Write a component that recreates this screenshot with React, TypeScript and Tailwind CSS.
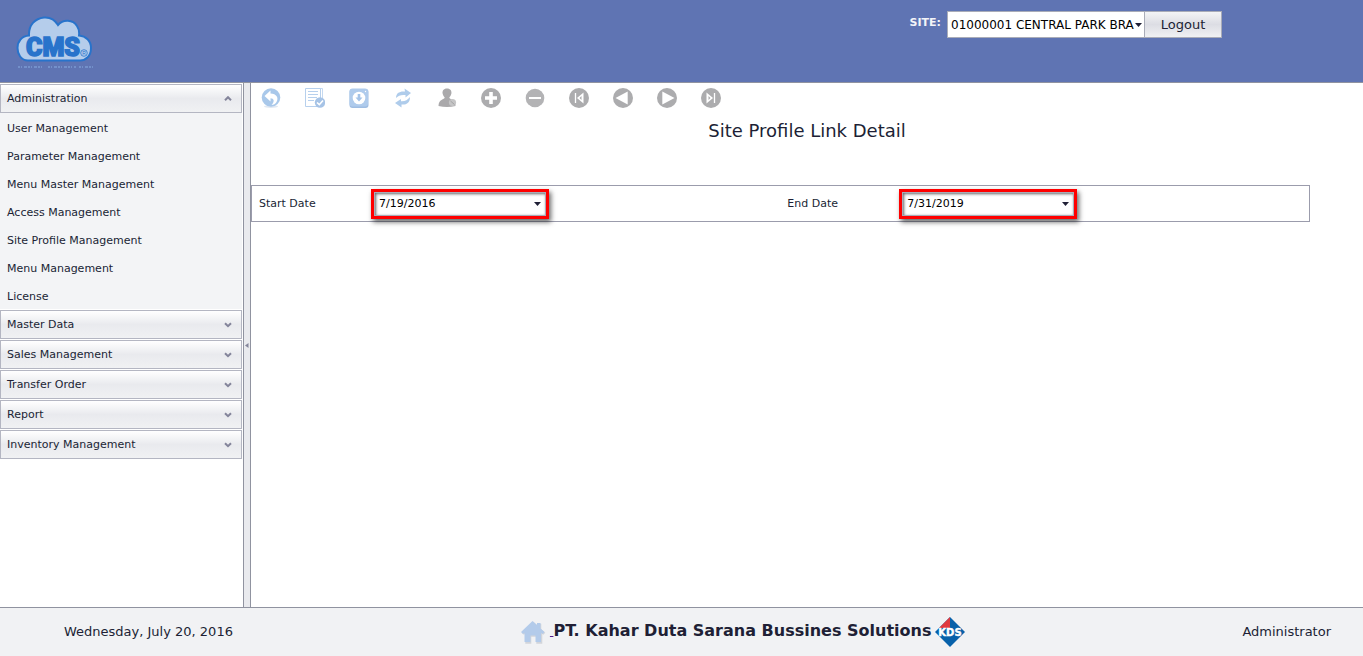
import React, { useState } from "react";

const adminLinks = [
  "User Management",
  "Parameter Management",
  "Menu Master Management",
  "Access Management",
  "Site Profile Management",
  "Menu Management",
  "License",
];

const groups = [
  { name: "Administration", links: adminLinks },
  { name: "Master Data", links: [] },
  { name: "Sales Management", links: [] },
  { name: "Transfer Order", links: [] },
  { name: "Report", links: [] },
  { name: "Inventory Management", links: [] },
];

function Logo() {
  return (
    <svg width="80" height="56" viewBox="0 0 80 56" role="img" aria-label="CMS">
      <path
        d="M12 44.500 C5 44.500 1.500 38 1.500 32 C1.500 25 6 20 13 19.500 C12.500 9 19 2.500 28 1.500 C34 1 39 4 42 9 C47 3 57 3.500 61 10 C63 13 63.500 16 63 19.500 C70 20 75 25 75 32 C75 40 70 44.500 64 44.500 Z"
        fill="#b5cdeb"
        stroke="#2873cb"
        strokeWidth="2"
      />
      <text
        x="37"
        y="40"
        textAnchor="middle"
        fontFamily="Roboto, 'Liberation Sans', sans-serif"
        fontWeight="900"
        fontSize="25"
        fill="#2873cb"
        stroke="#2873cb"
        strokeWidth="1.500"
      >
        CMS
      </text>
      <circle cx="68" cy="37" r="3.300" fill="none" stroke="#2873cb" strokeWidth="0.800" />
      <text x="68" y="39" textAnchor="middle" fontFamily="'Liberation Sans', sans-serif" fontSize="5" fill="#2873cb">
        R
      </text>
      <path d="M2 51 H28 M32 51 H60 M63 51 H77" stroke="#86a9df" strokeWidth="1.500" strokeDasharray="2 1 1 2 3 1" opacity="0.7" />
    </svg>
  );
}

function Chevron({ up }: { up: boolean }) {
  return (
    <svg width="8" height="6" viewBox="0 0 8 6" aria-hidden="true">
      <path d={up ? "M1 4.200 L4 1.200 L7 4.200" : "M1 1.200 L4 4.200 L7 1.200"} fill="none" stroke="#83849a" strokeWidth="2" />
    </svg>
  );
}

function Caret() {
  return (
    <svg width="7" height="4" viewBox="0 0 7 4" aria-hidden="true">
      <path d="M0 0 H7 L3.500 4 Z" fill="#202036" />
    </svg>
  );
}

const disc = <circle cx="10" cy="10" r="10" fill="#acacae" />;

const tools: { label: string; art: React.ReactNode }[] = [
  {
    label: "Back",
    art: (
      <>
        <ellipse cx="10" cy="18.500" rx="7" ry="1.500" fill="#e0e8f2" />
        <circle cx="10" cy="9.500" r="9.300" fill="#a9c8ea" />
        <path d="M3.500 8 L9.500 2.500 V5.500 C15.500 5.500 18 10 15.500 14 C14.500 15.800 12.500 17 10.500 17 C14 13.500 13 10.300 9.500 10.300 V13.500 Z" fill="#fff" />
      </>
    ),
  },
  {
    label: "Save",
    art: (
      <>
        <path d="M3 0.500 H17.500 V15" fill="none" stroke="#c5d9f0" />
        <path d="M0.500 0.500 H15.500 V18.500 H0.500 Z" fill="#fff" stroke="#b7d0ed" />
        <path d="M3 3.500 H13 M3 6.500 H13 M3 9.500 H12 M3 12.500 H9" stroke="#b7d0ed" />
        <circle cx="15" cy="14.500" r="5.200" fill="#a6c3e6" />
        <path d="M12 14.500 L14.300 16.700 L18 12.500" fill="none" stroke="#fff" strokeWidth="1.600" />
      </>
    ),
  },
  {
    label: "Download",
    art: (
      <>
        <rect x="0.500" y="1" width="19" height="19" rx="3" fill="#9fbde2" />
        <rect x="0.500" y="0.500" width="18.500" height="18" rx="3" fill="#afcbec" />
        <circle cx="10" cy="10" r="6.300" fill="#fff" />
        <path d="M8.700 6 H11.300 V9.500 H13.500 L10 13.500 L6.500 9.500 H8.700 Z" fill="#a4c3e8" />
        <circle cx="16.500" cy="3.500" r="0.700" fill="#fff" />
      </>
    ),
  },
  {
    label: "Refresh",
    art: (
      <>
        <path d="M3 10 C3 5 6.500 3 12 3.500 L11.500 0.500 L18 5 L12.500 9.500 V7 C8 6.500 5.500 7.500 3 10 Z" fill="#afcceb" />
        <path d="M17 9 C17 15 13.500 17 8.500 16.500 V19.500 L2 15 L8 11 V13.200 C12 13.500 14.500 12 17 9 Z" fill="#afcceb" />
      </>
    ),
  },
  {
    label: "User",
    art: (
      <>
        <path d="M10 0.500 C13.500 0.500 14.800 3 14.400 5.500 C14 7.500 13 8.700 12.300 9.500 C12.500 11.500 18.500 11 18.500 18 Q10 20 1.500 18 C1.500 11 7.500 11.500 7.700 9.500 C7 8.700 6 7.500 5.600 5.500 C5.200 3 6.500 0.500 10 0.500 Z" fill="#aaa9ab" />
        <circle cx="15.500" cy="14.500" r="3.600" fill="#c5c5c6" />
        <path d="M13.500 13 L17.500 16.500" stroke="#a4a4a5" />
      </>
    ),
  },
  { label: "Add", art: <>{disc}<path d="M10 4 V16 M4 10 H16" stroke="#fff" strokeWidth="3.600" /></> },
  {
    label: "Remove",
    art: (
      <>
        <circle cx="10" cy="10" r="9.300" fill="#b3b3b5" />
        <path d="M4 10 H16" stroke="#fff" strokeWidth="2" />
      </>
    ),
  },
  {
    label: "First",
    art: <>{disc}<path d="M6.500 5 V15" stroke="#fff" strokeWidth="1.300" /><path d="M14.500 4.500 V15.500 L8 10 Z" fill="#fff" /><path d="M12.500 8 V12 L10.500 10 Z" fill="#acacae" /></>,
  },
  { label: "Previous", art: <>{disc}<path d="M14.700 3.500 V16.500 L2.500 10 Z" fill="#fff" /></> },
  { label: "Next", art: <>{disc}<path d="M5.300 3.500 V16.500 L17.500 10 Z" fill="#fff" /></> },
  {
    label: "Last",
    art: <>{disc}<path d="M13.500 5 V15" stroke="#fff" strokeWidth="1.300" /><path d="M5.500 4.500 V15.500 L12 10 Z" fill="#fff" /><path d="M7.500 8 V12 L9.500 10 Z" fill="#acacae" /></>,
  },
];

function DateField({ id, label, initial }: { id: string; label: string; initial: string }) {
  const [value, setValue] = useState(initial);
  return (
    <div className="flex flex-1 items-center">
      <label htmlFor={id} className="w-[119px] shrink-0 pt-0.5 pl-[7px]">
        {label}
      </label>
      <div className="flex h-[30px] w-[178px] border-[3px] border-[#ff0000] bg-white shadow-[2px_3px_5px_rgba(0,0,0,0.6)]">
        <div className="flex min-w-0 flex-1 items-center border border-[#a9acb8] shadow-[inset_1px_1px_3px_rgba(0,0,0,0.6)]">
          <input
            id={id}
            value={value}
            onChange={(e) => setValue(e.target.value)}
            className="min-w-0 flex-1 bg-transparent pt-0.5 pl-1 text-black outline-none"
          />
          <button type="button" aria-label={"Choose " + label} className="flex h-full w-4 items-center justify-center">
            <Caret />
          </button>
        </div>
      </div>
    </div>
  );
}

export default function App() {
  const [open, setOpen] = useState("Administration");
  return (
    <div className="flex min-h-screen flex-col bg-white font-['DejaVu_Sans',Verdana,sans-serif] text-[11px] text-[#201f35]">
      <header className="flex h-[83px] shrink-0 items-start justify-between border-b border-[#9093a0] bg-[#5f74b3] pr-[141px]">
        <div className="pt-4 pl-4">
          <Logo />
        </div>
        <div className="flex items-start pt-[11px]">
          <label htmlFor="site" className="pt-1 pr-1.5 text-[11px] leading-4 font-bold text-[#f3f4f8]">
            SITE:
          </label>
          <div className="relative">
            <select
              id="site"
              className="h-[27px] w-[198px] appearance-none border border-[#a9acb8] bg-white pr-2 pl-[3px] text-[12px] text-black"
            >
              <option>01000001 CENTRAL PARK BRA</option>
            </select>
            <span className="pointer-events-none absolute top-3 right-[3px]">
              <Caret />
            </span>
          </div>
          <button
            type="button"
            className="h-[27px] w-[77px] border border-l-0 border-[#a9acb8] bg-linear-to-b from-[#f3f4f6] via-[#dcdde4] to-[#f0f1f3] text-[13px]"
          >
            Logout
          </button>
        </div>
      </header>

      <div className="flex flex-1">
        <nav className="flex w-[243px] shrink-0 flex-col gap-px pt-px pr-px">
          {groups.map((g) => (
            <section key={g.name}>
              <button
                type="button"
                aria-expanded={open === g.name}
                onClick={() => setOpen(open === g.name ? "" : g.name)}
                className="flex h-[29px] w-full items-center justify-between border border-[#b4b6c2] bg-linear-to-b from-white via-[#e9eaee] to-[#f0f1f3] pr-[9px] pl-1.5"
              >
                <span className="pt-0.5">{g.name}</span>
                <Chevron up={open === g.name} />
              </button>
              {open === g.name && g.links.length > 0 && (
                <ul className="bg-[#f3f4f6]">
                  {g.links.map((l) => (
                    <li key={l}>
                      <a href="#" className="flex h-7 items-center pt-1 pl-[7px]">
                        {l}
                      </a>
                    </li>
                  ))}
                </ul>
              )}
            </section>
          ))}
        </nav>

        <div className="flex w-2 shrink-0 items-center justify-center border-x border-[#9093a0] bg-[#e9eaee]">
          <svg width="4" height="5" viewBox="0 0 4 5" aria-hidden="true">
            <path d="M3.500 0 V5 L0 2.500 Z" fill="#83849a" />
          </svg>
        </div>

        <main className="min-w-0 flex-1">
          <div className="flex gap-6 pt-[5px] pl-2.5">
            {tools.map((t) => (
              <button key={t.label} type="button" aria-label={t.label} className="h-5 w-5">
                <svg width="20" height="20" viewBox="0 0 20 20" aria-hidden="true">
                  {t.art}
                </svg>
              </button>
            ))}
          </div>
          <h1 className="pt-3 text-center text-[18px] leading-[22px]">Site Profile Link Detail</h1>
          <form className="mt-[43px] flex h-[37px] w-[95.2%] border border-[#9b9cac]">
            <DateField id="start" label="Start Date" initial="7/19/2016" />
            <DateField id="end" label="End Date" initial="7/31/2019" />
          </form>
        </main>
      </div>

      <footer className="flex h-[49px] shrink-0 items-center border-t border-[#9093a0] bg-[#f1f2f4] text-[13px]">
        <span className="w-[243px] shrink-0 pl-16">Wednesday, July 20, 2016</span>
        <div className="flex flex-1 items-center justify-center text-[16px] font-bold">
          <a href="#" aria-label="Home" className="flex items-center">
            <svg width="26" height="26" viewBox="0 0 26 26" aria-hidden="true">
              <path d="M12.500 2 L17 6 V4 H20.500 V9.500 L24.500 13 L22.500 15 L21.500 14 V24 H15.500 V17 H10.500 V24 H4.500 V14 L3 15 L1 13 Z" fill="#d2d5da" transform="translate(0.800 0.800)" />
              <path d="M12.500 2 L17 6 V4 H20.500 V9.500 L24.500 13 L22.500 15 L21 13.800 V23 H15.500 V16.500 H10.500 V23 H4.500 V13.800 L3 15 L1 13 Z" fill="#b3cbea" />
            </svg>
            <span className="pl-1 text-[11px] font-normal text-[#551a8b] underline">&nbsp;</span>
          </a>
          <span className="pb-0.5">PT. Kahar Duta Sarana Bussines Solutions</span>
          <svg width="30" height="30" viewBox="0 0 30 30" className="ml-1" role="img" aria-label="KDS">
            <path d="M15 0 L30 15 L15 30 L0 15 Z" fill="#0861aa" />
            <path d="M15 0 V11 L4 11 Z" fill="#e0393f" />
            <text
              x="15"
              y="19"
              textAnchor="middle"
              fontFamily="'DejaVu Sans', sans-serif"
              fontWeight="bold"
              fontSize="10"
              fill="#fff"
              stroke="#fff"
              strokeWidth="0.400"
            >
              KDS
            </text>
          </svg>
        </div>
        <span className="pr-8 text-right">Administrator</span>
      </footer>
    </div>
  );
}
